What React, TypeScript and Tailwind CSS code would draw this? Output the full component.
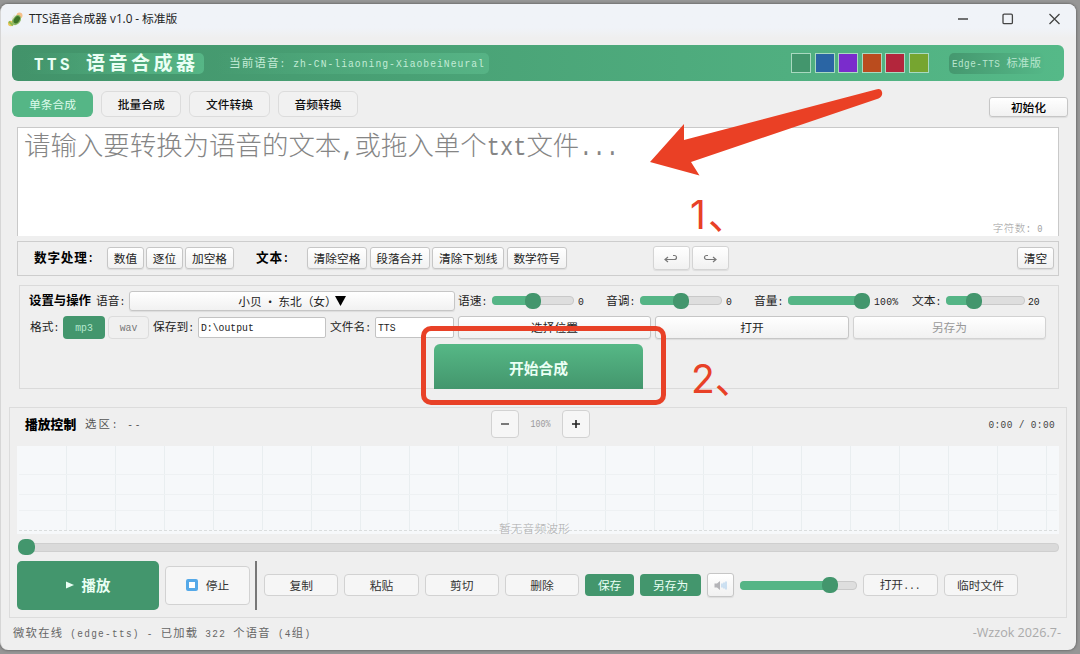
import type { ReactNode } from 'react'
import clsx from 'clsx'

interface BoxProps {
  className?: string
  children?: ReactNode
}

const SWATCHES = ['bg-[#43966d]', 'bg-[#2a65a4]', 'bg-[#7a2ccc]', 'bg-[#ba4c1e]', 'bg-[#b3263c]', 'bg-[#76a530]']

const V_LINES = Array.from({ length: 21 }, (_, i) => 49 * (i + 1))

// Latin runs are half the width of a Chinese character and stretched to its height
function Mix({ text }: { text: string }) {
  const parts = text.split(/([\x20-\x7e]+)/).filter(Boolean)
  return (
    <span className="whitespace-pre">
      {parts.map((p, i) =>
        /^[\x20-\x7e]+$/.test(p)
          ? <span key={i} className="inline-block scale-y-[1.2] origin-[50%_77%] text-[0.8333em] font-['Liberation_Mono',monospace]">{p}</span>
          : <span key={i}>{p}</span>
      )}
    </span>
  )
}

function Label({ text, className }: { text: string; className?: string }) {
  return <div className={clsx('shrink-0 whitespace-nowrap', className)}><Mix text={text} /></div>
}

// Native looking push button
function Btn({ className, children }: BoxProps) {
  return (
    <button className={clsx('shrink-0 flex items-center justify-center rounded-[3px] border border-[#c6c6c6] bg-linear-to-b from-white to-[#f1f1f1] shadow-[0_1px_1px_rgba(0,0,0,0.08)]', className)}>
      {children}
    </button>
  )
}

// Flat rounded button
function FlatBtn({ className, children }: BoxProps) {
  return (
    <button className={clsx('shrink-0 flex items-center justify-center rounded-[4px] border border-[#d2d2d2] bg-[#f6f6f6] text-[#333]', className)}>
      {children}
    </button>
  )
}

function GreenBtn({ className, children }: BoxProps) {
  return (
    <button className={clsx('shrink-0 flex items-center justify-center rounded-[4px] bg-[#43966d] text-[#e9fff4]', className)}>
      {children}
    </button>
  )
}

function Slider({ value, width }: { value: number; width: number }) {
  const left = (width - 16) * value
  return (
    <div className="relative shrink-0 h-4 flex items-center" style={{ width }}>
      <div className="w-full h-[9px] rounded-[4px] border border-[#c9c9c9] bg-[#dedede]" />
      <div className="absolute left-0 top-[3.5px] h-[9px] rounded-[4px] bg-[#55b586]" style={{ width: left + 8 }} />
      <div className="absolute top-0 size-4 rounded-[7px] bg-[#43966d]" style={{ left }} />
    </div>
  )
}

function TitleBar() {
  return (
    <div className="h-[34px] shrink-0 flex items-center pl-[7px] pr-[15px] pb-1 bg-linear-to-b from-[#f0f3f8] from-70% to-[#efefef]">
      <svg width="17" height="17" viewBox="0 0 17 17">
        <circle cx="12.5" cy="4.5" r="3" fill="#f5c08a" />
        <circle cx="3.8" cy="12.5" r="2.8" fill="#e9c65a" />
        <ellipse cx="9.5" cy="9" rx="4" ry="5.6" transform="rotate(35 9.5 9)" fill="#8bb765" />
        <ellipse cx="9.8" cy="8.8" rx="2.6" ry="4" transform="rotate(35 9.8 8.8)" fill="#3c7328" />
        <path d="M2 10.500 6 14.500" stroke="#8cb955" strokeWidth="2" />
        <path d="M8 4 5 8" stroke="#dfe6d2" strokeWidth="1.6" />
      </svg>
      <span className="ml-[5px] text-[11.8px] tracking-[-0.05px] text-[#222] font-['Open_Sans','Noto_Sans_CJK_SC',sans-serif]">TTS语音合成器 v1.0 - 标准版</span>
      <div className="ml-auto flex items-center">
        <svg width="104" height="12" viewBox="0 0 104 12" fill="none" stroke="#444" strokeWidth="1.3">
          <path d="M1 6h10" />
          <rect x="46" y="1.2" width="9.4" height="9.4" rx="1.2" />
          <path d="M92.500 1l10 10M102.500 1l-10 10" />
        </svg>
      </div>
    </div>
  )
}

function Header() {
  return (
    <div className="mt-[7px] ml-3 w-[1052px] h-9 shrink-0 flex items-center rounded-[6px] bg-linear-to-r from-[#42936a] to-[#55b988] text-[#eafff4]">
      <div className="ml-[14px] w-[178px] h-[21px] pl-2 flex items-center rounded-[5px] bg-linear-to-r from-transparent to-[#56b686] text-[19px] tracking-[3.5px] font-semibold">
        <Mix text="TTS 语音合成器" />
      </div>
      <div className="ml-3 w-[273px] h-[21px] pl-[13px] flex items-center rounded-[5px] bg-linear-to-r from-transparent to-[#56b385] text-[11.6px] tracking-[1.05px] text-[#c3ecd7]">
        <Mix text="当前语音: zh-CN-liaoning-XiaobeiNeural" />
      </div>
      <div className="ml-auto flex gap-[3.6px]">
        {SWATCHES.map(c => <div key={c} className={clsx('size-5 border border-[#a9d9c0]', c)} />)}
      </div>
      <div className="ml-5 mr-5 w-[95px] h-[21px] pl-[3px] flex items-center rounded-[5px] bg-linear-to-r from-[#45986f] to-[#54b787] text-[11.2px] tracking-[0.45px] text-[#b9e6cf]">
        <Mix text="Edge-TTS 标准版" />
      </div>
    </div>
  )
}

function Tabs() {
  return (
    <div className="mt-[10px] h-[26px] shrink-0 flex items-start pl-3 text-[11.75px]">
      <button className="w-[81px] h-[26px] rounded-[6px] bg-[#55b686] text-[#dcfbeb]">单条合成</button>
      {['批量合成', '文件转换', '音频转换'].map(t => (
        <button key={t} className="ml-2 w-[80.4px] h-[26px] rounded-[6px] border border-[#dcdcdc] bg-[#f1f1f1] text-[#111] font-medium">{t}</button>
      ))}
      <Btn className="ml-auto mr-2 mt-[6px] w-[79px] h-5 font-medium">初始化</Btn>
    </div>
  )
}

function TextPanel() {
  return (
    <div className="mt-[10px] ml-[17px] w-[1042px] h-[109px] shrink-0 flex flex-col justify-between border border-b-0 border-[#c9c9c9] bg-white">
      <div className="pl-[6px] h-[37px] flex items-center text-[26.45px] leading-none font-light text-[#858585]">
        <Mix text="请输入要转换为语音的文本,或拖入单个txt文件..." />
      </div>
      <div className="self-end pr-[15px] h-[14px] flex items-center text-[10.5px] tracking-[0.5px] text-[#a0a0a0] font-light"><Mix text="字符数: 0" /></div>
    </div>
  )
}

function ToolPanel() {
  return (
    <div className="mt-[5px] ml-[17px] w-[1042px] h-[35px] shrink-0 flex items-center pl-4 pr-1 pb-px border border-[#cdcdcd] text-[11.7px] text-[#222]">
      <Label text="数字处理:" className="w-[73px] font-bold text-[12.6px] tracking-[0.8px] text-black" />
      <div className="flex gap-[2px]">
        <Btn className="w-[37px] h-[22px]">数值</Btn>
        <Btn className="w-[37px] h-[22px]">逐位</Btn>
        <Btn className="w-[49px] h-[22px]">加空格</Btn>
      </div>
      <Label text="文本:" className="ml-[22px] w-[51px] font-bold text-[12.6px] tracking-[0.8px] text-black" />
      <div className="flex gap-[2.6px]">
        <Btn className="w-[60px] h-[22px]">清除空格</Btn>
        <Btn className="w-[60px] h-[22px]">段落合并</Btn>
        <Btn className="w-[72px] h-[22px]">清除下划线</Btn>
        <Btn className="w-[60px] h-[22px]">数学符号</Btn>
      </div>
      <div className="ml-[86px] flex gap-[2px]">
        <Btn className="w-[37px] h-6 border-[#d4d4d4]!">
          <svg width="14" height="9" viewBox="0 0 14 9" fill="none" stroke="#777" strokeWidth="1.2"><path d="M1 5.500h9.500a2 2 0 0 0 0-4H9M4 3 1 5.500 4 8" /></svg>
        </Btn>
        <Btn className="w-[37px] h-6 border-[#d4d4d4]!">
          <svg width="14" height="9" viewBox="0 0 14 9" fill="none" stroke="#777" strokeWidth="1.2"><path d="M13 5.500H3.500a2 2 0 0 1 0-4H5M10 3l3 2.500L10 8" /></svg>
        </Btn>
      </div>
      <Btn className="ml-auto w-[37px] h-[22px]">清空</Btn>
    </div>
  )
}

function Settings() {
  return (
    <div className="mt-[9px] ml-[19px] w-[1040px] h-[104px] shrink-0 pl-[9px] border border-[#dadada] text-[11.75px] text-[#222]">
      <div className="mt-[4.5px] h-5 flex items-center">
        <Label text="设置与操作" className="w-[67px] text-[12.4px] font-bold text-black" />
        <Label text="语音:" className="w-[33px]" />
        <Btn className="w-[326px] h-5"><span className="whitespace-pre tracking-[-0.1px]">小贝 · 东北（女）</span><svg className="-ml-[2px]" width="11" height="10" viewBox="0 0 11 10"><path d="M0 0h11L5.500 10z" fill="#000" /></svg></Btn>
        <Label text="语速:" className="ml-[3px] w-[34px]" />
        <Slider value={0.5} width={82} />
        <Label text="0" className="ml-1 w-7" />
        <Label text="音调:" className="w-[34px]" />
        <Slider value={0.5} width={82} />
        <Label text="0" className="ml-1 w-7" />
        <Label text="音量:" className="w-[34px]" />
        <Slider value={1} width={82} />
        <Label text="100%" className="ml-1 w-[38px] tracking-[0.2px]" />
        <Label text="文本:" className="w-[34px]" />
        <Slider value={0.32} width={79} />
        <Label text="20" className="ml-[3px]" />
      </div>
      <div className="mt-[5px] h-[23px] flex items-center">
        <Label text="格式:" className="pl-[1px] w-[34px]" />
        <GreenBtn className="w-[42px] h-[23px] text-[#b5e8cf]!"><Mix text="mp3" /></GreenBtn>
        <FlatBtn className="ml-[3px] w-[41px] h-[23px] border-[#dcdcdc]! bg-[#f0f0f0]! text-[#777]!"><Mix text="wav" /></FlatBtn>
        <Label text="保存到:" className="ml-[4px] w-[45px]" />
        <div className="w-32 h-[21px] flex items-center pl-[2px] rounded-[2px] border border-[#c3c3c3] bg-white"><Mix text="D:\output" /></div>
        <Label text="文件名:" className="ml-1 w-[45px]" />
        <div className="w-[79px] h-[21px] flex items-center pl-[2px] rounded-[2px] border border-[#c3c3c3] bg-white"><Mix text="TTS" /></div>
        <Btn className="ml-1 w-[193px] h-[23px]">选择位置</Btn>
        <Btn className="ml-1 w-[194px] h-[23px]">打开</Btn>
        <Btn className="ml-1 w-[193px] h-[23px] text-[#999] border-[#d2d2d2]!">另存为</Btn>
      </div>
      <button className="mt-[5.5px] ml-[405px] w-[209px] h-[45px] rounded-t-[6px] bg-linear-to-b from-[#56b886] to-[#43966d] pt-[3px] text-[14.8px] font-bold text-[#eafff4]">开始合成</button>
    </div>
  )
}

function Waveform() {
  return (
    <div className="mt-[8px] ml-[7px] w-[1042px] h-[88px] relative bg-[#f6f8fa]">
      <svg width="1042" height="88" viewBox="0 0 1042 88" stroke="#e9eef0">
        {V_LINES.map(x => <path key={x} d={`M${x + 0.5} 0V84`} />)}
        <path d="M2 28.500H1040M2 48.500H1040M2 64.500H1040" stroke="#eef1f3" />
        <path d="M2 84.500H1040" stroke="#dadddd" strokeDasharray="3 2" />
      </svg>
      <span className="absolute left-[482px] top-[76px] text-[11.8px] leading-3 text-[#aaa] font-light">暂无音频波形</span>
    </div>
  )
}

function Player() {
  return (
    <div className="mt-[18px] ml-[9px] w-[1058px] h-[211px] shrink-0 border border-[#dcdcdc] text-[11.75px]">
      <div className="mt-[2px] h-7 flex items-center pl-[15px] pr-[11px]">
        <Label text="播放控制" className="w-[60px] text-[12.8px] font-black text-black" />
        <Label text="选区: --" className="w-[406px] text-[11.4px] tracking-[2px] text-[#555]" />
        <FlatBtn className="w-7 h-7"><svg width="10" height="10" stroke="#444" strokeWidth="1.4"><path d="M1 5h8" /></svg></FlatBtn>
        <Label text="100%" className="w-[43px] text-center text-[10px] text-[#999]" />
        <FlatBtn className="w-7 h-7"><svg width="10" height="10" stroke="#222" strokeWidth="1.6"><path d="M1 5h8M5 1v8" /></svg></FlatBtn>
        <Label text="0:00 / 0:00" className="ml-auto text-[11.4px] tracking-[0.35px] text-[#444]" />
      </div>
      <Waveform />
      <div className="mt-[5px] ml-2 w-[1041px] h-4 relative flex items-center">
        <div className="w-full h-[9px] rounded-[4px] border border-[#cfcfcf] bg-[#dadada]" />
        <div className="absolute left-0 top-0 w-[17px] h-4 rounded-[7px] bg-[#43966d]" />
      </div>
      <div className="mt-[5.5px] ml-[7px] h-[49px] flex items-center">
        <GreenBtn className="w-[142px] h-[49px] gap-2 rounded-[5px]! text-[14.4px] font-bold">
          <svg width="8" height="8" viewBox="0 0 8 8"><path d="M0 0.500 8 4 0 7.500z" fill="#eafff4" /></svg>
          播放
        </GreenBtn>
        <FlatBtn className="ml-[6px] w-[85px] h-[39px] gap-2">
          <svg width="12" height="12" viewBox="0 0 12 12"><rect x="1.5" y="1.5" width="9" height="9" rx="0.5" fill="#fff" stroke="#55a9e8" strokeWidth="3" /></svg>
          停止
        </FlatBtn>
        <div className="ml-[5px] mr-[7px] w-[2px] h-[49px] bg-[#777]" />
        <div className="flex gap-[5.9px] items-center">
          {['复制', '粘贴', '剪切', '删除'].map(t => <FlatBtn key={t} className="w-[74.4px] h-[22px]">{t}</FlatBtn>)}
          <GreenBtn className="w-[49px] h-[22px]">保存</GreenBtn>
          <GreenBtn className="w-[61px] h-[22px]">另存为</GreenBtn>
          <Btn className="w-[27px] h-6">
            <svg width="13" height="11" viewBox="0 0 13 11" fill="none">
              <path d="M0.500 3.500H3L6 1v9L3 7.500H0.500z" fill="#b4b4b8" />
              <path d="M8 3.500v4M10 2.500v6M12 1.500v8" stroke="#a9cdec" strokeWidth="1.1" />
            </svg>
          </Btn>
          <Slider value={0.81} width={117} />
          <FlatBtn className="w-[75px] h-[22px]"><Mix text="打开..." /></FlatBtn>
          <FlatBtn className="w-[74px] h-[22px]">临时文件</FlatBtn>
        </div>
      </div>
    </div>
  )
}

function StatusBar() {
  return (
    <div className="h-7 shrink-0 flex items-center justify-between pt-[3px] pl-[13px] pr-[15px]">
      <div className="text-[11.3px] tracking-[1.3px] text-[#666]"><Mix text="微软在线 (edge-tts) - 已加载 322 个语音 (4组)" /></div>
      <span className="text-[12.6px] text-[#aaa] font-['Open_Sans',sans-serif]">-Wzzok 2026.7-</span>
    </div>
  )
}

// Red marks on top of the window
function Annotations() {
  return (
    <>
      <svg className="absolute left-[645px] top-[84px]" width="245" height="96" viewBox="645 84 245 96">
        <path d="M650 162 684 124V140L876 89.500Q881 88 882 92T878.500 98.500L691 162 699.500 175.500Z" fill="#ea4025" />
      </svg>
      <div className="absolute left-[421px] top-[326px] w-[245px] h-[79px] rounded-[10px] border-[5px] border-[#e84127]" />
      <div className="absolute left-[690px] top-[195px] flex text-[39px] leading-[39px] text-[#e84127] font-['Inter','Noto_Sans_CJK_SC',sans-serif]">1<span className="ml-[2px]">、</span></div>
      <div className="absolute left-[691px] top-[359px] flex text-[39px] leading-[39px] text-[#e84127] font-['Inter','Noto_Sans_CJK_SC',sans-serif]">2<span>、</span></div>
    </>
  )
}

export default function App() {
  return (
    <div className="relative w-[1080px] h-[654px] overflow-hidden bg-[#969696] pt-1 leading-none font-['Noto_Sans_CJK_SC',sans-serif]">
      <div className="w-[1076px] h-[646px] flex flex-col overflow-hidden rounded-[8px] border-l border-[#d6d6d6] bg-[#efefef] shadow-[0_0_3px_rgba(0,0,0,0.5)]">
        <div className="-ml-px flex flex-col">
          <TitleBar />
          <Header />
          <Tabs />
          <TextPanel />
          <ToolPanel />
          <Settings />
          <Player />
          <StatusBar />
        </div>
      </div>
      <Annotations />
    </div>
  )
}
